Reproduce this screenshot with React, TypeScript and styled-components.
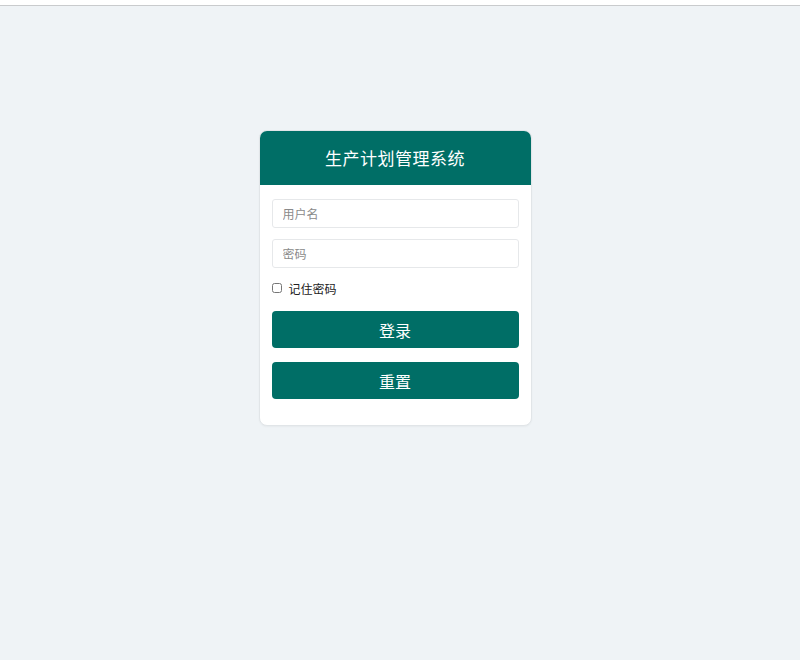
import styled, { createGlobalStyle } from 'styled-components';

const GlobalStyle = createGlobalStyle`
    html, body {
        margin: 0;
        padding: 0;
        background: #ffffff;
    }
    body {
        font-family: "Noto Sans CJK SC", "Noto Sans", "Liberation Sans", sans-serif;
    }
`

const Page = styled.div`
    margin-top: 5px;
    border-top: 1px solid #c9cbcd;
    background-color: #eff3f6;
    height: 655px;
    box-sizing: border-box;
    padding: 124px 10px 0 0;

    display: flex;
    justify-content: center;
    align-items: flex-start;
`

const Card = styled.div`
    width: 273px;
    background-color: #ffffff;
    border: 1px solid #e1e5e8;
    border-radius: 8px;
    overflow: hidden;
    box-sizing: border-box;
    box-shadow: 0 1px 2px rgba(0, 0, 0, 0.04);
`

const Header = styled.div`
    height: 54px;
    background-color: #006e66;
    color: #ffffff;
    display: flex;
    justify-content: center;
    align-items: center;
    padding-bottom: 2px;
    box-sizing: border-box;
    font-size: 17px;
    letter-spacing: 0.5px;
`

const Form = styled.form`
    padding: 14px 12px 26px;
    display: flex;
    flex-direction: column;
`

const Input = styled.input`
    height: 29px;
    box-sizing: border-box;
    border: 1px solid #e6e8ea;
    border-radius: 3px;
    padding: 0 10px;
    font-size: 12px;
    font-family: inherit;
    color: #333;
    margin-bottom: 11px;
    outline: none;
    &::placeholder {
        color: #8a8a8a;
    }
`

const Remember = styled.label`
    display: flex;
    align-items: center;
    gap: 7px;
    font-size: 12px;
    color: #222;
    margin: 0 0 14px;
    height: 18px;
    >input{
        margin: 0;
        width: 10px;
        height: 10px;
    }
`

const Button = styled.button`
    height: 37px;
    border: none;
    border-radius: 4px;
    background-color: #006e66;
    color: #ffffff;
    font-size: 16px;
    font-family: inherit;
    cursor: pointer;
    margin-bottom: 14px;
    &:last-child{
        margin-bottom: 0;
    }
`

const App = () => {
    return (
        <>
            <GlobalStyle />
            <Page>
                <Card>
                    <Header>生产计划管理系统</Header>
                    <Form onSubmit={(e) => e.preventDefault()}>
                        <Input type='text' placeholder='用户名' />
                        <Input type='password' placeholder='密码' />
                        <Remember>
                            <input type='checkbox' />
                            记住密码
                        </Remember>
                        <Button type='submit'>登录</Button>
                        <Button type='reset'>重置</Button>
                    </Form>
                </Card>
            </Page>
        </>
    );
}

export default App;
